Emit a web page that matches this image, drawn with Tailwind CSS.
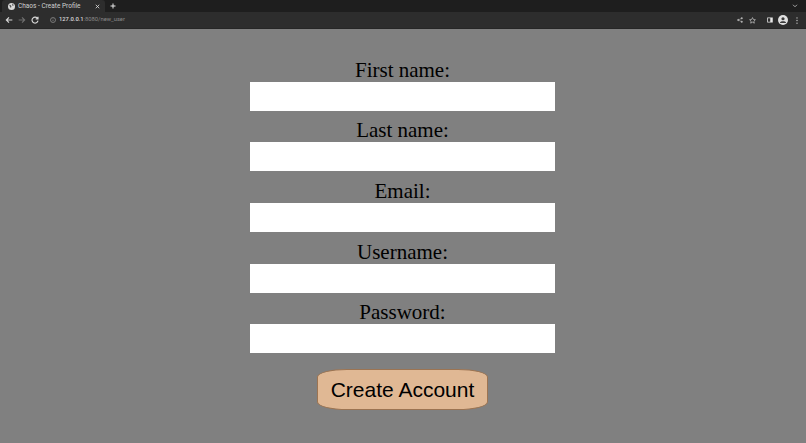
<!DOCTYPE html>
<html lang="en">

<head>
    <meta charset="UTF-8">
    <title>Chaos - Create Profile</title>
    <script src="https://cdn.jsdelivr.net/npm/@tailwindcss/browser@4"></script>
</head>

<body class="w-[806px] h-[443px] overflow-hidden bg-[#808080] font-['Liberation_Serif',serif]">

    <!-- browser chrome -->
    <div class="h-[29px] flex flex-col font-['Roboto',sans-serif]">
        <div class="h-[12px] bg-[#1e1e1e] flex items-center">
            <div class="w-[103px] h-[12px] ml-[2px] bg-[#2d2d2d] rounded-t-[3px] flex items-center pl-[6px] pr-[5px] gap-[3px]">
                <svg class="w-[7px] h-[7px] shrink-0" viewBox="0 0 12 12">
                    <circle cx="6" cy="6" r="6" fill="#d8d8d8" />
                    <path d="M2 3l3 1 1 3-2 1zM8 1l2 3-2 1-1-2z" fill="#555" />
                </svg>
                <span class="flex-1 text-[6.500px] leading-none text-[#cfcfcf] whitespace-nowrap">Chaos - Create Profile</span>
                <svg class="w-[5px] h-[5px] shrink-0" viewBox="0 0 10 10" stroke="#e0e0e0" stroke-width="1.600">
                    <path d="M1.500 1.500l7 7M8.500 1.500l-7 7" />
                </svg>
            </div>
            <svg class="w-[6px] h-[6px] ml-[5px]" viewBox="0 0 12 12" stroke="#e8e8e8" stroke-width="2">
                <path d="M6 1v10M1 6h10" />
            </svg>
            <svg class="w-[6px] h-[4px] ml-auto mr-[8px]" viewBox="0 0 10 8" fill="none" stroke="#b8b8b8" stroke-width="1.800">
                <path d="M1 1.500l4 4 4-4" />
            </svg>
        </div>
        <div class="h-[17px] bg-[#2d2d2d] flex items-center pl-[5px] pr-[8px] border-b border-[#262626]">
            <svg class="w-[8px] h-[8px]" viewBox="0 0 12 12" fill="none" stroke="#d8d8d8" stroke-width="1.700">
                <path d="M11 6H2M6 2L2 6l4 4" />
            </svg>
            <svg class="w-[8px] h-[8px] ml-[5px]" viewBox="0 0 12 12" fill="none" stroke="#6e6e6e" stroke-width="1.700">
                <path d="M1 6h9M6 2l4 4-4 4" />
            </svg>
            <svg class="w-[8px] h-[8px] ml-[5px]" viewBox="0 0 12 12" fill="none" stroke="#d8d8d8" stroke-width="1.700">
                <path d="M10 4a4.500 4.500 0 1 0 .5 3M10.500 1v3.500H7" />
            </svg>
            <svg class="w-[6px] h-[6px] ml-[11px]" viewBox="0 0 12 12" fill="none" stroke="#a8a8a8" stroke-width="1.200">
                <circle cx="6" cy="6" r="5" />
                <path d="M6 5.500v3M6 3.200v1" />
            </svg>
            <span class="ml-[3px] text-[5.800px] leading-none whitespace-nowrap text-[#8a8a8a]"><span class="font-medium text-[#dcdcdc]">127.0.0.1</span>:8080/new_user</span>
            <svg class="w-[6px] h-[6px] ml-auto" viewBox="0 0 12 12" fill="#bdbdbd" stroke="#bdbdbd">
                <path d="M9.500 2.500L2.500 6l7 3.500" fill="none" />
                <circle cx="9.500" cy="2.500" r="1.500" />
                <circle cx="2.500" cy="6" r="1.500" />
                <circle cx="9.500" cy="9.500" r="1.500" />
            </svg>
            <svg class="w-[7px] h-[7px] ml-[6px]" viewBox="0 0 12 12" fill="none" stroke="#bdbdbd" stroke-width="1.300">
                <path d="M6 1l1.500 3.300 3.500.4-2.600 2.400.7 3.500L6 8.800l-3.100 1.800.7-3.500L1 4.700l3.500-.4z" />
            </svg>
            <svg class="w-[6px] h-[6px] ml-[11px]" viewBox="0 0 12 12">
                <rect x="0.500" y="1" width="11" height="10" fill="#e8e8e8" />
                <rect x="2" y="2.500" width="4.500" height="7" fill="#2d2d2d" />
            </svg>
            <svg class="w-[10px] h-[10px] ml-[5px]" viewBox="0 0 20 20">
                <circle cx="10" cy="10" r="10" fill="#e0e0e0" />
                <circle cx="10" cy="7.500" r="3.200" fill="#3a3a3a" />
                <path d="M4 15c1-3.500 11-3.500 12 0v1H4z" fill="#3a3a3a" />
            </svg>
            <svg class="w-[2px] h-[7px] ml-[8px]" viewBox="0 0 2 8" fill="#c8c8c8">
                <circle cx="1" cy="1" r="0.800" />
                <circle cx="1" cy="4" r="0.800" />
                <circle cx="1" cy="7" r="0.800" />
            </svg>
        </div>
    </div>

    <!-- form -->
    <form class="w-[305px] ml-[250px] pt-[27.800px] flex flex-col items-center text-black">
        <label class="text-[21px] leading-[26px] h-[25px]">First name:</label>
        <input type="text" class="block w-full h-[29px] mb-[6.600px] bg-white">
        <label class="text-[21px] leading-[26px] h-[25px]">Last name:</label>
        <input type="text" class="block w-full h-[29px] mb-[6.600px] bg-white">
        <label class="text-[21px] leading-[26px] h-[25px]">Email:</label>
        <input type="text" class="block w-full h-[29px] mb-[6.600px] bg-white">
        <label class="text-[21px] leading-[26px] h-[25px]">Username:</label>
        <input type="text" class="block w-full h-[29px] mb-[6.600px] bg-white">
        <label class="text-[21px] leading-[26px] h-[25px]">Password:</label>
        <input type="text" class="block w-full h-[29px] bg-white">
        <button type="button" class="mt-[16px] w-[171px] h-[41px] bg-[#e0b894] border-[1.500px] border-[#9c7452] rounded-[30px/8px] text-[21px] leading-none font-['Liberation_Sans',sans-serif] text-black">Create Account</button>
    </form>

</body>

</html>
